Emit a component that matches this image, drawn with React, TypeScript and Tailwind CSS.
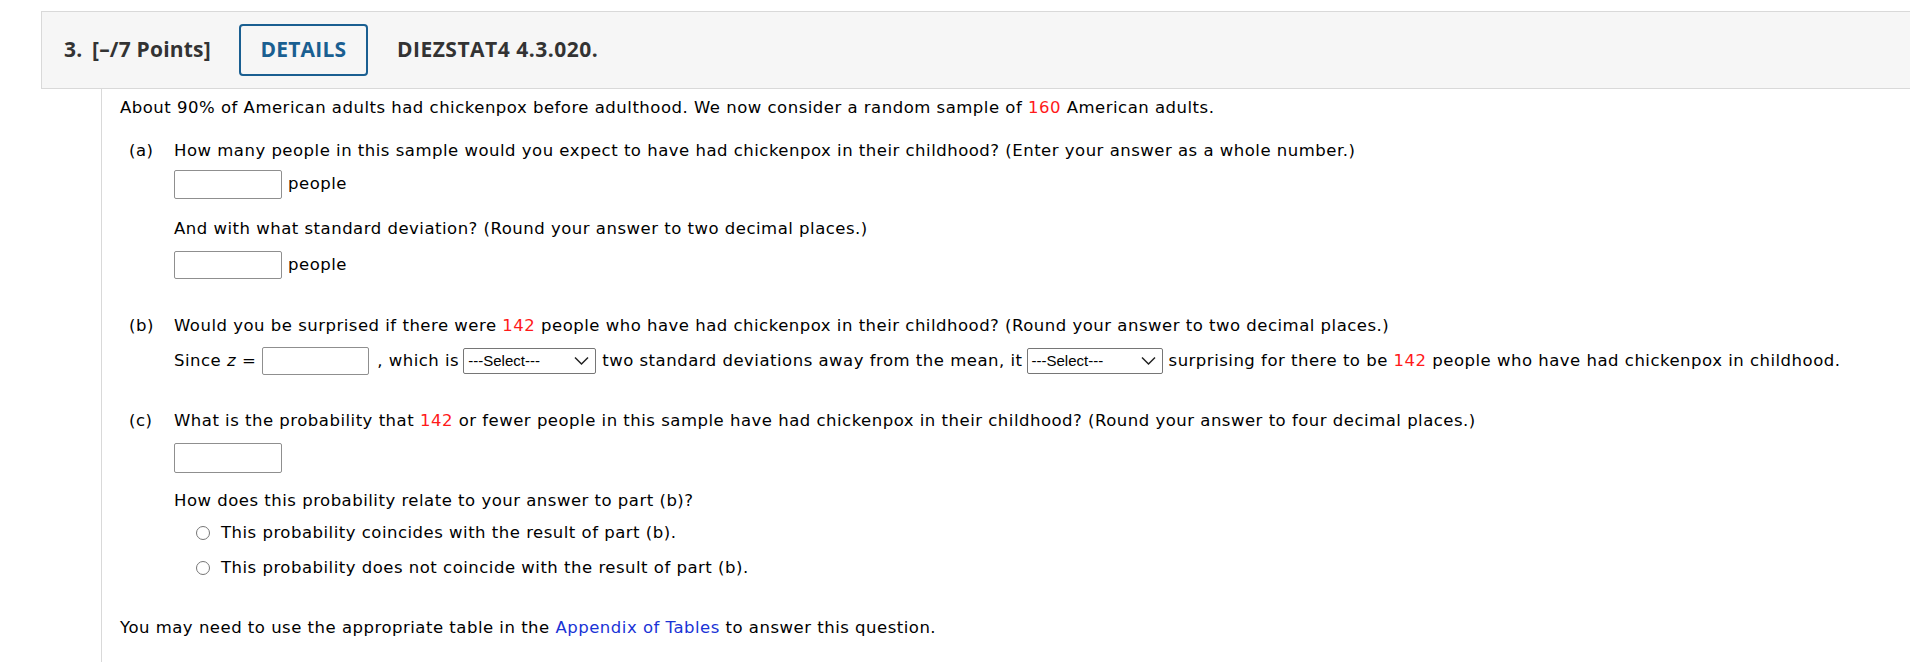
import React from 'react';

const Red = ({ children }: { children: React.ReactNode }) => (
  <span className="text-[#ff1a1a]">{children}</span>
);

const TextBox = ({ w = 'w-[108px]', h = 'h-[29px]' }: { w?: string; h?: string }) => (
  <input
    type="text"
    className={`${w} ${h} border border-[#8f8f8f] rounded-[2px] bg-white outline-none`}
  />
);

const Select = ({ w }: { w: string }) => (
  <div
    className={`${w} h-[26px] flex items-center justify-between border border-[#767676] rounded-[2px] bg-white pl-[4px] pr-[6px] font-['Liberation_Sans',Arial,sans-serif] text-[15px] tracking-normal text-black`}
  >
    <span>---Select---</span>
    <svg width="15" height="10" viewBox="0 0 15 10" fill="none">
      <path d="M1 1.5l6.5 6.5 6.5-6.5" stroke="#222" strokeWidth="1.5" />
    </svg>
  </div>
);

const Radio = ({ label }: { label: string }) => (
  <label className="flex items-center h-[20px]">
    <span className="w-[14px] h-[14px] rounded-full border border-[#767676] bg-white mr-[11px] shrink-0" />
    <span>{label}</span>
  </label>
);

const Part = ({ tag, children }: { tag: string; children: React.ReactNode }) => (
  <div className="flex pl-[9px]">
    <div className="w-[45px] shrink-0 leading-[20px]">{tag}</div>
    <div className="flex-1">{children}</div>
  </div>
);

export default function App() {
  return (
    <div className="min-h-screen bg-white pt-[11px] pl-[41px] font-['DejaVu_Sans',Verdana,sans-serif] text-[16.5px] text-black">
      <div className="h-[78px] flex items-center bg-[#f6f6f6] border-y border-l border-[#d9d9d9] pl-[22px] font-['Open_Sans',sans-serif] font-bold text-[21px] tracking-[0.2px] text-[#333]">
        <span className="w-[28px]">3.</span>
        <span>[–/7 Points]</span>
        <div className="ml-[28px] w-[129px] h-[52px] flex items-center justify-center border-2 border-[#1a5f91] rounded-[4px] text-[#1a5f91] bg-[#f6f6f6]">
          DETAILS
        </div>
        <span className="ml-[29px] tracking-[0.5px]">DIEZSTAT4 4.3.020.</span>
      </div>

      <div className="ml-[60px] border-l border-[#d9d9d9] pl-[18px] pt-[9px] pb-[24px] tracking-[0.5px]">
        <p className="leading-[20px]">
          About 90% of American adults had chickenpox before adulthood. We now consider a random sample of <Red>160</Red> American adults.
        </p>

        <div className="mt-[23px]">
          <Part tag="(a)">
            <p className="leading-[20px]">
              How many people in this sample would you expect to have had chickenpox in their childhood? (Enter your answer as a whole number.)
            </p>
            <div className="mt-[9px] flex items-center gap-[6px]">
              <TextBox />
              <span>people</span>
            </div>
            <p className="mt-[20px] leading-[20px]">
              And with what standard deviation? (Round your answer to two decimal places.)
            </p>
            <div className="mt-[12px] flex items-center gap-[6px]">
              <TextBox h="h-[28px]" />
              <span>people</span>
            </div>
          </Part>
        </div>

        <div className="mt-[37px]">
          <Part tag="(b)">
            <p className="leading-[20px]">
              Would you be surprised if there were <Red>142</Red> people who have had chickenpox in their childhood? (Round your answer to two decimal places.)
            </p>
            <div className="mt-[11px] flex items-center h-[28px] whitespace-nowrap">
              <span>
                Since <i>z</i> =
              </span>
              <span className="ml-[6px]">
                <TextBox w="w-[107px]" h="h-[28px]" />
              </span>
              <span className="ml-[8px] mr-[4px]">, which is</span>
              <Select w="w-[133px]" />
              <span className="ml-[6px] mr-[4px]">two standard deviations away from the mean, it</span>
              <Select w="w-[136px]" />
              <span className="ml-[6px]">
                surprising for there to be <Red>142</Red> people who have had chickenpox in childhood.
              </span>
            </div>
          </Part>
        </div>

        <div className="mt-[36px]">
          <Part tag="(c)">
            <p className="leading-[20px]">
              What is the probability that <Red>142</Red> or fewer people in this sample have had chickenpox in their childhood? (Round your answer to four decimal places.)
            </p>
            <div className="mt-[12px]">
              <TextBox h="h-[30px]" />
            </div>
            <p className="mt-[18px] leading-[20px]">How does this probability relate to your answer to part (b)?</p>
            <div className="pl-[22px]">
              <div className="mt-[12px]">
                <Radio label="This probability coincides with the result of part (b)." />
              </div>
              <div className="mt-[15px]">
                <Radio label="This probability does not coincide with the result of part (b)." />
              </div>
            </div>
          </Part>
        </div>

        <p className="mt-[40px] leading-[20px]">
          You may need to use the appropriate table in the <span className="text-[#1a33d6]">Appendix of Tables</span> to answer this question.
        </p>
      </div>
    </div>
  );
}
